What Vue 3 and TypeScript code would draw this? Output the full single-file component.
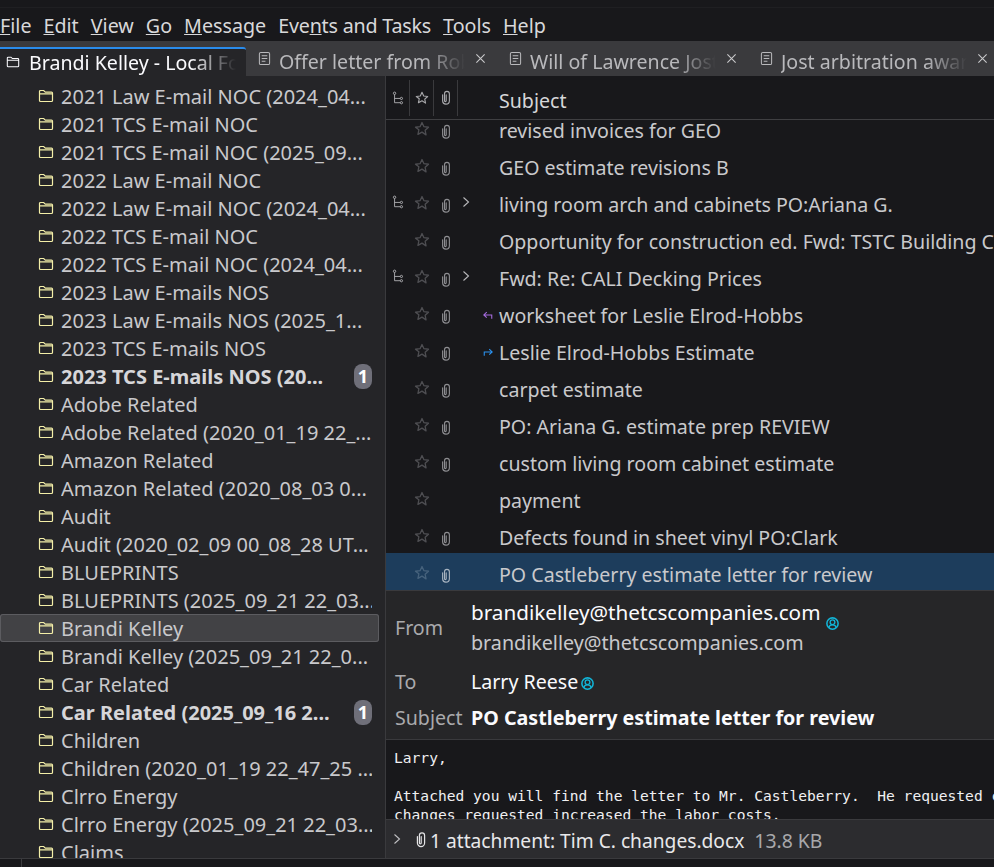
<script setup lang="ts">
const menus = [
  ['', 'F', 'ile'], ['', 'E', 'dit'], ['', 'V', 'iew'], ['', 'G', 'o'], ['', 'M', 'essage'],
  ['Eve', 'n', 'ts and Tasks'], ['', 'T', 'ools'], ['', 'H', 'elp'],
]
const tabs = ['Offer letter from Robert', 'Will of Lawrence Jost', 'Jost arbitration award']
const folders: { t: string; b?: boolean; sel?: boolean }[] = [
  { t: '2021 Law E-mail NOC (2024_04...' }, { t: '2021 TCS E-mail NOC' }, { t: '2021 TCS E-mail NOC (2025_09...' },
  { t: '2022 Law E-mail NOC' }, { t: '2022 Law E-mail NOC (2024_04...' }, { t: '2022 TCS E-mail NOC' },
  { t: '2022 TCS E-mail NOC (2024_04...' }, { t: '2023 Law E-mails NOS' }, { t: '2023 Law E-mails NOS (2025_1...' },
  { t: '2023 TCS E-mails NOS' }, { t: '2023 TCS E-mails NOS (20...', b: true }, { t: 'Adobe Related' },
  { t: 'Adobe Related (2020_01_19 22_...' }, { t: 'Amazon Related' }, { t: 'Amazon Related (2020_08_03 0...' },
  { t: 'Audit' }, { t: 'Audit (2020_02_09 00_08_28 UT...' }, { t: 'BLUEPRINTS' }, { t: 'BLUEPRINTS (2025_09_21 22_03...' },
  { t: 'Brandi Kelley', sel: true }, { t: 'Brandi Kelley (2025_09_21 22_0...' }, { t: 'Car Related' },
  { t: 'Car Related (2025_09_16 2...', b: true }, { t: 'Children' }, { t: 'Children (2020_01_19 22_47_25 ...' },
  { t: 'Clrro Energy' }, { t: 'Clrro Energy (2025_09_21 22_03...' }, { t: 'Claims' },
]
const messages: { s: string; tree?: boolean; clip?: boolean; st?: string; sel?: boolean }[] = [
  { s: 'revised invoices for GEO', clip: true },
  { s: 'GEO estimate revisions B', clip: true },
  { s: 'living room arch and cabinets PO:Ariana G.', clip: true, tree: true },
  { s: 'Opportunity for construction ed. Fwd: TSTC Building Construction', clip: true },
  { s: 'Fwd: Re: CALI Decking Prices', clip: true, tree: true },
  { s: 'worksheet for Leslie Elrod-Hobbs', clip: true, st: 'reply' },
  { s: 'Leslie Elrod-Hobbs Estimate', clip: true, st: 'fwd' },
  { s: 'carpet estimate', clip: true },
  { s: 'PO: Ariana G. estimate prep REVIEW', clip: true },
  { s: 'custom living room cabinet estimate', clip: true },
  { s: 'payment' },
  { s: 'Defects found in sheet vinyl PO:Clark', clip: true },
  { s: 'PO Castleberry estimate letter for review', clip: true, sel: true },
]
</script>

<template>
  <div class="app">
    <svg class="defs" width="0" height="0" aria-hidden="true">
      <defs>
        <symbol id="i-folder" viewBox="0 0 16 16">
          <path d="M1.5 3.5c0-.6.4-1 1-1h3.2l1.6 1.6h6.2c.6 0 1 .4 1 1v7.4c0 .6-.4 1-1 1H2.5c-.6 0-1-.4-1-1zM1.5 5.9h13" fill="none" stroke="currentColor" stroke-width="1.2" />
        </symbol>
        <symbol id="i-doc" viewBox="0 0 14 16">
          <rect x="1.5" y="1.5" width="11" height="13" rx="1.5" fill="none" stroke="currentColor" stroke-width="1.1" />
          <path d="M4 5h6M4 8h6M4 11h4" fill="none" stroke="currentColor" stroke-width="1.1" />
        </symbol>
        <symbol id="i-x" viewBox="0 0 12 12">
          <path d="M1.5 1.5l9 9M10.5 1.5l-9 9" fill="none" stroke="currentColor" stroke-width="1.2" />
        </symbol>
        <symbol id="i-tree" viewBox="0 0 14 16">
          <circle cx="3" cy="2.5" r="1.4" fill="none" stroke="currentColor" />
          <circle cx="11" cy="8.5" r="1.3" fill="none" stroke="currentColor" />
          <circle cx="11" cy="13.5" r="1.3" fill="none" stroke="currentColor" />
          <path d="M3 4v9.500h6.500M3 8.500h6.500" fill="none" stroke="currentColor" />
        </symbol>
        <symbol id="i-star" viewBox="0 0 16 16">
          <path d="M8 1.500l1.950 4.200 4.550.55-3.350 3.100.9 4.500L8 11.100l-4.050 2.250.9-4.500L1.500 6.250l4.550-.55z" fill="none" stroke="currentColor" stroke-width="1.300" stroke-linejoin="round" />
        </symbol>
        <symbol id="i-clip" viewBox="0 0 10 16">
          <path d="M5.200 5v6.500a.9.9 0 0 1-1.800 0V4a2.600 2.600 0 0 1 5.200 0v7.500a3.600 3.600 0 0 1-7.200 0V5" fill="none" stroke="currentColor" stroke-width="1.200" stroke-linecap="round" />
        </symbol>
        <symbol id="i-chev" viewBox="0 0 8 12">
          <path d="M1.500 1.500L6.500 6l-5 4.500" fill="none" stroke="currentColor" stroke-width="1.100" />
        </symbol>
        <symbol id="i-reply" viewBox="0 0 12 10">
          <path d="M4.500 1L1 4.300l3.500 3.200M1 4.300h9.500V9" fill="none" stroke="currentColor" stroke-width="1.300" />
        </symbol>
        <symbol id="i-fwd" viewBox="0 0 12 10">
          <path d="M7.500 1L11 4.300 7.500 7.500M11 4.300H1.500V9" fill="none" stroke="currentColor" stroke-width="1.300" />
        </symbol>
        <symbol id="i-contact" viewBox="0 0 12 12">
          <circle cx="6" cy="6" r="5.200" fill="none" stroke="currentColor" stroke-width="1.400" />
          <circle cx="6" cy="4.800" r="2.200" fill="none" stroke="currentColor" stroke-width="1.200" />
          <path d="M2.600 10c.3-1.700 1.500-2.700 3.400-2.700s3.100 1 3.400 2.700" fill="none" stroke="currentColor" stroke-width="1.200" />
        </symbol>
      </defs>
    </svg>

    <header class="menubar">
      <span v-for="(m, i) in menus" :key="i" class="menu">{{ m[0] }}<u>{{ m[1] }}</u>{{ m[2] }}</span>
    </header>

    <nav class="tabbar">
      <div class="tab active">
        <svg class="tab-icon folder-w"><use href="#i-folder" /></svg>
        <span class="tab-label">Brandi Kelley - Local Folders</span>
      </div>
      <div v-for="t in tabs" :key="t" class="tab">
        <svg class="tab-icon doc"><use href="#i-doc" /></svg>
        <span class="tab-label">{{ t }}</span>
        <svg class="tab-x"><use href="#i-x" /></svg>
      </div>
    </nav>

    <main class="panes">
      <aside class="folders">
        <div v-for="f in folders" :key="f.t" class="folder" :class="{ selected: f.sel, bold: f.b }">
          <svg class="folder-icon"><use href="#i-folder" /></svg>
          <span class="folder-name">{{ f.t }}</span>
          <span v-if="f.b" class="badge">1</span>
        </div>
      </aside>

      <section class="right">
        <div class="thead">
          <span class="th"><svg class="ic-tree"><use href="#i-tree" /></svg></span>
          <span class="th"><svg class="ic-star head"><use href="#i-star" /></svg></span>
          <span class="th"><svg class="ic-clip"><use href="#i-clip" /></svg></span>
          <span class="th-subject">Subject</span>
        </div>
        <div class="mlist">
          <div v-for="m in messages" :key="m.s" class="mrow" :class="{ sel: m.sel }">
            <span class="c c-tree"><svg v-if="m.tree" class="ic-tree"><use href="#i-tree" /></svg></span>
            <span class="c"><svg class="ic-star"><use href="#i-star" /></svg></span>
            <span class="c c-clip"><svg v-if="m.clip" class="ic-clip"><use href="#i-clip" /></svg></span>
            <span class="c c-chev"><svg v-if="m.tree" class="ic-chev"><use href="#i-chev" /></svg></span>
            <span class="c c-status">
              <svg v-if="m.st === 'reply'" class="ic-st reply"><use href="#i-reply" /></svg>
              <svg v-if="m.st === 'fwd'" class="ic-st fwd"><use href="#i-fwd" /></svg>
            </span>
            <span class="subject">{{ m.s }}</span>
          </div>
        </div>

        <div class="mhead">
          <div class="hrow from">
            <span class="hlabel">From</span>
            <span class="from-lines">
              <span class="name first">brandikelley@thetcscompanies.com <svg class="ic-contact shifted"><use href="#i-contact" /></svg></span>
              <span class="addr">brandikelley@thetcscompanies.com</span>
            </span>
          </div>
          <div class="hrow">
            <span class="hlabel">To</span>
            <span class="name">Larry Reese <svg class="ic-contact"><use href="#i-contact" /></svg></span>
          </div>
          <div class="hrow">
            <span class="hlabel">Subject</span>
            <strong class="hsubject">PO Castleberry estimate letter for review</strong>
          </div>
        </div>

        <div class="body">
          <pre class="body-text">Larry,

Attached you will find the letter to Mr. Castleberry.  He requested changes and the
changes requested increased the labor costs.</pre>
        </div>

        <div class="attach">
          <svg class="att-chev"><use href="#i-chev" /></svg>
          <svg class="att-clip"><use href="#i-clip" /></svg>
          <span class="att-name">1 attachment: Tim C. changes.docx</span>
          <span class="att-size">13.8 KB</span>
        </div>
      </section>
    </main>

    <footer class="status"><span class="status-cell"></span></footer>
  </div>
</template>

<style>
html, body { margin: 0; background: #18181b; }
</style>

<style scoped>
.app {
  width: 994px;
  height: 867px;
  display: flex;
  flex-direction: column;
  overflow: hidden;
  background: #18181b;
  color: #d6d6d8;
  font-family: "Noto Sans", "Open Sans", sans-serif;
  font-size: 19.6px;
}
.defs { position: absolute; }
svg { display: block; flex: none; }

.menubar {
  height: 34px;
  margin-top: 7px;
  padding-top: 2px;
  border-top: 1px solid #1f1f22;
  box-sizing: border-box;
  display: flex;
  align-items: center;
  gap: 12px;
  flex: none;
  font-size: 19.7px;
}
.menu { white-space: nowrap; color: #d8d8da; }
.menu:nth-child(6) { letter-spacing: -0.2px; }

.tabbar {
  height: 35px;
  flex: none;
  display: flex;
  background: #3a3a3d;
  overflow: hidden;
}
.tab {
  width: 251px;
  flex: none;
  display: flex;
  align-items: center;
  padding-left: 12px;
  padding-top: 6px;
  box-sizing: border-box;
  color: #b9b9bc;
}
.tab.active {
  width: 246px;
  padding-left: 6px;
  padding-top: 0;
  background: #252528;
  border-top: 2px solid #2a8cec;
  margin-top: 6px;
  border-top-right-radius: 3px;
  color: #fbfbfe;
}
.tab-icon { width: 14px; height: 16px; margin-right: 9px; margin-top: -2px; }
.tab-icon.doc { width: 13px; height: 15px; margin-right: 8px; margin-top: -6px; }
.tab-label {
  width: 186px;
  overflow: hidden;
  white-space: nowrap;
  -webkit-mask-image: linear-gradient(to right, #000 78%, transparent);
  mask-image: linear-gradient(to right, #000 78%, transparent);
}
.tab.active .tab-label { width: 207px; }
.tab-x { width: 11px; height: 11px; margin-left: 10px; margin-top: -6px; color: #c8c8ca; }

.panes { flex: 1; min-height: 0; display: flex; }

.folders {
  width: 385px;
  flex: none;
  background: #252528;
  border-right: 1px solid #3a3a3d;
  box-sizing: content-box;
  padding-top: 6px;
  overflow: hidden;
  font-size: 20px;
}
.folder {
  height: 28px;
  margin-right: 6px;
  padding-left: 38px;
  padding-right: 7px;
  display: flex;
  align-items: center;
  box-sizing: border-box;
  color: #c9c9cc;
  border-radius: 3px;
}
.folder.selected { background: #424245; box-shadow: inset 0 0 0 1px #5c5c60; }
.folder.bold { font-weight: 700; color: #d6d6d9; }
.folder-icon { width: 16px; height: 16px; margin-right: 7px; color: #f4efa8; }
.folder-name { flex: 1; white-space: nowrap; overflow: hidden; }
.badge {
  width: 18px;
  height: 25px;
  border-radius: 8px;
  background: #6f6f79;
  color: #fff;
  font-size: 18px;
  font-weight: 700;
  display: flex;
  align-items: center;
  justify-content: center;
}

.right { flex: 1; min-width: 0; display: flex; flex-direction: column; }

.thead {
  height: 44px;
  flex: none;
  display: flex;
  align-items: center;
  box-sizing: border-box;
  border-bottom: 1px solid #3f3f42;
}
.th {
  width: 24px;
  height: 36px;
  flex: none;
  display: flex;
  align-items: center;
  justify-content: center;
  border-right: 1px solid #3a3a3d;
  box-sizing: border-box;
}
.th-subject { padding-left: 41px; padding-top: 5px; color: #d6d6d8; }

.ic-tree { width: 12px; height: 14px; color: #b8b8bb; }
.ic-star { width: 16px; height: 16px; color: #4e4e52; margin-top: 3px; }
.ic-star.head { width: 14px; height: 14px; color: #a8a8ab; margin-top: 0; }
.ic-clip { width: 10px; height: 15px; color: #a9a9ad; }
.ic-chev { width: 8px; height: 12px; color: #b8b8bb; }
.ic-st { width: 10px; height: 9px; margin-left: auto; margin-right: 6px; margin-top: 5px; }
.reply { color: #a66ce0; }
.fwd { color: #2a92f0; }
.mrow .ic-clip { color: #8e8e92; margin-top: 8px; }

.mlist {
  height: 471px;
  flex: none;
  display: flex;
  flex-direction: column;
  justify-content: flex-end;
  overflow: hidden;
  border-bottom: 1px solid #3a3a3d;
  box-sizing: border-box;
}
.mrow {
  height: 37px;
  flex: none;
  display: flex;
  align-items: center;
  color: #c9c9cc;
  white-space: nowrap;
}
.subject { padding-top: 5px; }
.mrow.sel { background: #1d3d5c; }
.mrow.sel .ic-star { color: #46627c; }
.mrow.sel .ic-clip { color: #a9b5c1; }
.c { width: 24px; flex: none; display: flex; align-items: center; justify-content: center; }
.c-chev { width: 16px; }
.c-status { width: 25px; }

.mhead {
  height: 149px;
  flex: none;
  box-sizing: border-box;
  background: #262628;
  border-bottom: 1px solid #3a3a3d;
  padding-top: 6px;
}
.hrow { display: flex; align-items: center; height: 36px; padding-left: 9px; white-space: nowrap; }
.hrow.from { height: 60px; margin-bottom: 6px; }
.hlabel { width: 76px; flex: none; color: #aaaaad; }
.from-lines { display: flex; flex-direction: column; }
.name { color: #fbfbfe; display: flex; align-items: center; gap: 3px; }
.name.first { font-size: 20.7px; height: 30px; }
.addr { color: #c9c9cc; height: 30px; line-height: 30px; margin-top: 1px; font-size: 19.7px; }
.ic-contact { width: 13px; height: 13px; color: #12b5d8; margin-top: 4px; }
.ic-contact.shifted { margin-top: 24px; margin-left: 3px; }
.hsubject { color: #fbfbfe; font-weight: 700; font-size: 19.7px; }

.body { flex: 1; min-height: 0; overflow: hidden; }
.body-text {
  margin: 8px 0 0 8px;
  font-family: "DejaVu Sans Mono", "Liberation Mono", monospace;
  font-size: 14.6px;
  line-height: 19px;
  color: #f0f0f2;
}

.attach {
  height: 39px;
  flex: none;
  box-sizing: border-box;
  background: #2c2c2f;
  border-top: 1px solid #3a3a3d;
  display: flex;
  align-items: center;
  padding-left: 7px;
  padding-top: 2px;
  white-space: nowrap;
  font-size: 19.4px;
}
.att-chev { width: 8px; height: 12px; color: #c0c0c3; margin-right: 15px; margin-top: -2px; }
.att-clip { width: 10px; height: 17px; color: #e4e4e6; margin-right: 4px; margin-top: -2px; }
.att-name { color: #e8e8ea; font-size: 19.2px; }
.att-size { color: #a8a8ab; margin-left: 10px; }

.status {
  height: 9px;
  flex: none;
  box-sizing: border-box;
  border-top: 1px solid #3a3a3d;
  background: #18181b;
}
.status-cell { display: block; width: 21px; height: 100%; border-right: 1px solid #3a3a3d; }
</style>
